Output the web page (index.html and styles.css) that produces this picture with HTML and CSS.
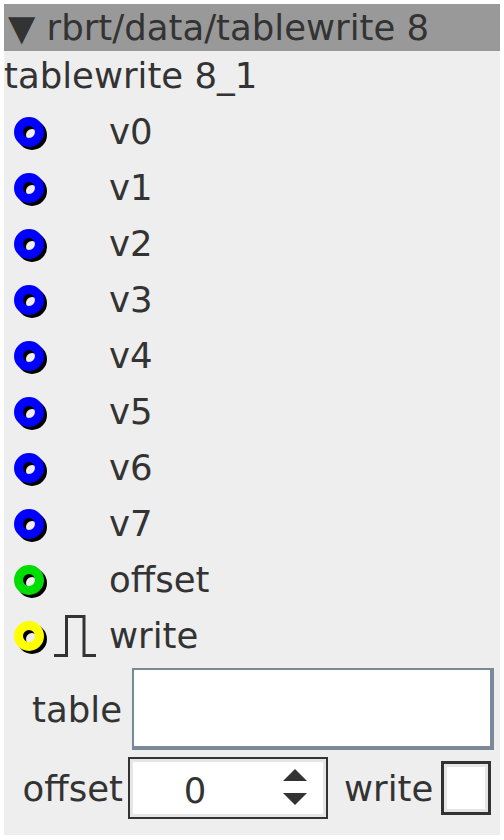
FILE: index.html
```html
<!DOCTYPE html>
<html lang="en">
<head>
    <meta charset="UTF-8">
    <title>tablewrite 8</title>
    <link rel="stylesheet" href="styles.css">
</head>
<body>
    <div class="panel">
        <div class="header">▼ rbrt/data/tablewrite 8</div>
        <div class="title">tablewrite 8_1</div>

        <!-- Inlets -->
        <div class="ports" id="ports"></div>

        <!-- Properties -->
        <div class="fields">
            <div class="field-row table-row">
                <label class="field-label">table</label>
                <input type="text" class="table-input">
            </div>
            <div class="field-row offset-row">
                <label class="field-label">offset</label>
                <div class="spinbox">
                    <span class="spin-value">0</span>
                    <svg class="spin-arrows" width="26" height="40" viewBox="0 0 26 40">
                        <polygon points="1,13 13,1 25,13" fill="#333"/>
                        <polygon points="1,25 25,25 13,37" fill="#333"/>
                    </svg>
                </div>
                <label class="write-label">write</label>
                <div class="checkbox"></div>
            </div>
        </div>
    </div>

    <script>
        // Build the inlet rows
        const ports = [
            { name: 'v0', color: '#0000ff' },
            { name: 'v1', color: '#0000ff' },
            { name: 'v2', color: '#0000ff' },
            { name: 'v3', color: '#0000ff' },
            { name: 'v4', color: '#0000ff' },
            { name: 'v5', color: '#0000ff' },
            { name: 'v6', color: '#0000ff' },
            { name: 'v7', color: '#0000ff' },
            { name: 'offset', color: '#00dd00' },
            { name: 'write', color: '#ffff00', trigger: true }
        ];

        const list = document.getElementById('ports');
        ports.forEach(port => {
            const row = document.createElement('div');
            row.className = 'port-row';
            let icons = `<svg class="port-ring" width="44" height="44" viewBox="0 0 44 44">
                    <circle cx="25" cy="25" r="10.5" fill="none" stroke="#000" stroke-width="9"/>
                    <circle cx="22" cy="22" r="10.5" fill="none" stroke="${port.color}" stroke-width="9"/>
                </svg>`;
            if (port.trigger) {
                icons += `<svg class="pulse" width="46" height="46" viewBox="0 0 46 46">
                    <path d="M1 42.5 H13.5 V3.5 H31 V42.5 H43" fill="none" stroke="#333" stroke-width="3"/>
                </svg>`;
            }
            row.innerHTML = `<div class="port-icons">${icons}</div><span class="port-name">${port.name}</span>`;
            list.appendChild(row);
        });
    </script>
</body>
</html>
```

FILE: styles.css
```css
body {
    margin: 4px;
    font-family: "DejaVu Sans", sans-serif;
    font-size: 35.5px;
    color: #333;
    background-color: #fff;
}

.panel {
    background-color: #eeeeee;
}

.header {
    height: 47px;
    line-height: 47px;
    padding-left: 4px;
    background-color: #999999;
    white-space: nowrap;
}

.title {
    height: 53px;
    line-height: 50px;
}

.port-row {
    height: 56px;
    display: flex;
    align-items: center;
}

.port-icons {
    width: 105px;
    display: flex;
    align-items: center;
    padding-left: 3px;
    box-sizing: border-box;
}

.pulse {
    margin-left: 2px;
}

.port-name {
    line-height: 56px;
}

.fields {
    padding: 4px 6px 16px 0;
}

.field-row {
    display: flex;
    align-items: center;
}

.table-row .field-label {
    width: 118px;
    text-align: right;
    margin-right: 10px;
}

.table-input {
    width: 362px;
    height: 82px;
    box-sizing: border-box;
    background-color: #fff;
    border-style: solid;
    border-color: #7b8895;
    border-width: 2px 4px 4px 2px;
    padding: 0;
    margin: 0;
    outline: none;
}

.offset-row {
    margin-top: 7px;
}

.offset-row .field-label {
    width: 119px;
    text-align: right;
    margin-right: 5px;
}

.spinbox {
    width: 200px;
    height: 62px;
    box-sizing: border-box;
    border: 2px solid #333;
    box-shadow: inset 0 0 0 3px #e6e6e6;
    background-color: #fff;
    display: flex;
    align-items: center;
}

.spin-value {
    flex: 1;
    text-align: center;
    padding-top: 4px;
    padding-right: 22px;
}

.spin-arrows {
    margin-right: 18px;
}

.write-label {
    margin-left: 16px;
    margin-right: 8px;
}

.checkbox {
    width: 50px;
    height: 54px;
    box-sizing: border-box;
    border: 3px solid #333;
    box-shadow: inset 0 0 0 3px #e6e6e6;
    background-color: #fff;
}
```
